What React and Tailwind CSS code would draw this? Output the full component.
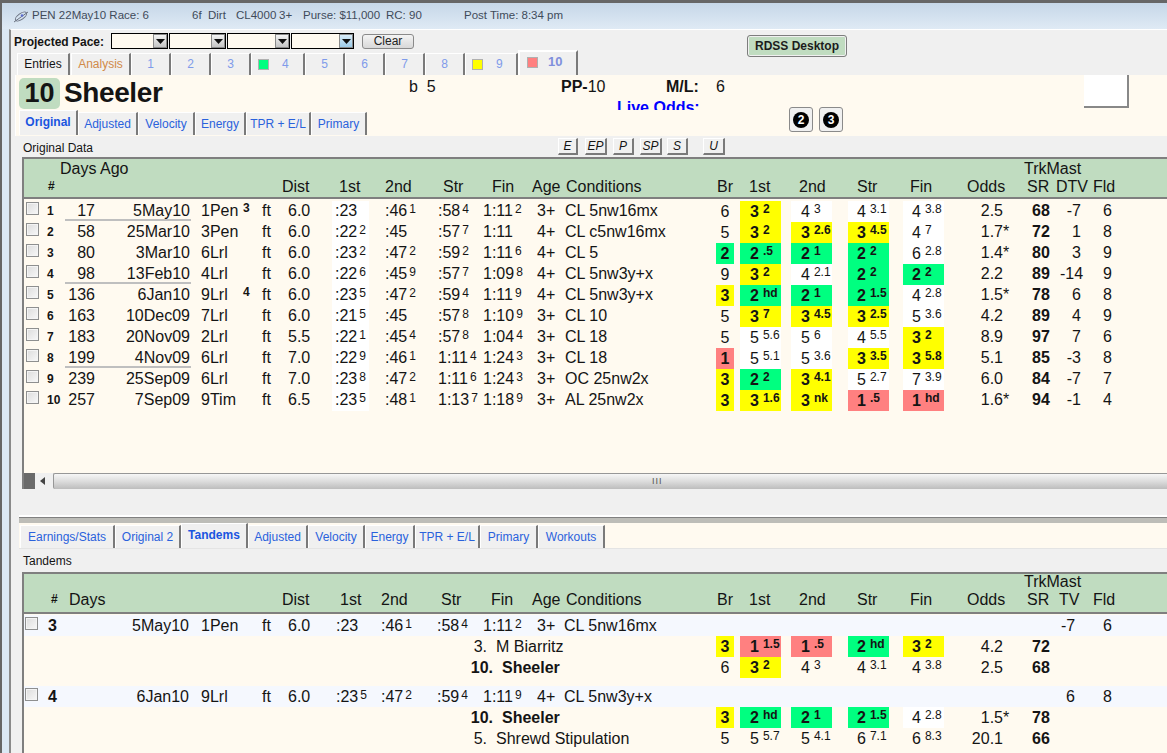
const BG = {
  y: 'bg-[#ffff00]',
  g: 'bg-[#00ff80]',
  r: 'bg-[#ff8080]',
  w: 'bg-white',
  n: '',
};

const TOP_ROWS = [
  { n: '1', days: '17', date: '5May10', track: '1Pen', tsup: '3', dist: '6.0', t1: [':23', ''], t2: [':46', '1'], t3: [':58', '4'], t4: ['1:11', '2'], age: '3+', cond: 'CL 5nw16mx', br: ['6', 'n'], p: [['3', '2', 'y'], ['4', '3', 'w'], ['4', '3.1', 'w'], ['4', '3.8', 'w']], odds: '2.5', star: false, sr: '68', dtv: '-7', fld: '6', line: true },
  { n: '2', days: '58', date: '25Mar10', track: '3Pen', tsup: '', dist: '6.0', t1: [':22', '2'], t2: [':45', ''], t3: [':57', '7'], t4: ['1:11', ''], age: '4+', cond: 'CL c5nw16mx', br: ['5', 'n'], p: [['3', '2', 'y'], ['3', '2.6', 'y'], ['3', '4.5', 'y'], ['4', '7', 'w']], odds: '1.7', star: true, sr: '72', dtv: '1', fld: '8' },
  { n: '3', days: '80', date: '3Mar10', track: '6Lrl', tsup: '', dist: '6.0', t1: [':23', '2'], t2: [':47', '2'], t3: [':59', '2'], t4: ['1:11', '6'], age: '4+', cond: 'CL 5', br: ['2', 'g'], p: [['2', '.5', 'g'], ['2', '1', 'g'], ['2', '2', 'g'], ['6', '2.8', 'w']], odds: '1.4', star: true, sr: '80', dtv: '3', fld: '9' },
  { n: '4', days: '98', date: '13Feb10', track: '4Lrl', tsup: '', dist: '6.0', t1: [':22', '6'], t2: [':45', '9'], t3: [':57', '7'], t4: ['1:09', '8'], age: '4+', cond: 'CL 5nw3y+x', br: ['9', 'n'], p: [['3', '2', 'y'], ['4', '2.1', 'w'], ['2', '2', 'g'], ['2', '2', 'g']], odds: '2.2', star: false, sr: '89', dtv: '-14', fld: '9', line: true },
  { n: '5', days: '136', date: '6Jan10', track: '9Lrl', tsup: '4', dist: '6.0', t1: [':23', '5'], t2: [':47', '2'], t3: [':59', '4'], t4: ['1:11', '9'], age: '4+', cond: 'CL 5nw3y+x', br: ['3', 'y'], p: [['2', 'hd', 'g'], ['2', '1', 'g'], ['2', '1.5', 'g'], ['4', '2.8', 'w']], odds: '1.5', star: true, sr: '78', dtv: '6', fld: '8' },
  { n: '6', days: '163', date: '10Dec09', track: '7Lrl', tsup: '', dist: '6.0', t1: [':21', '5'], t2: [':45', ''], t3: [':57', '8'], t4: ['1:10', '9'], age: '3+', cond: 'CL 10', br: ['5', 'n'], p: [['3', '7', 'y'], ['3', '4.5', 'y'], ['3', '2.5', 'y'], ['5', '3.6', 'w']], odds: '4.2', star: false, sr: '89', dtv: '4', fld: '9' },
  { n: '7', days: '183', date: '20Nov09', track: '2Lrl', tsup: '', dist: '5.5', t1: [':22', '1'], t2: [':45', '4'], t3: [':57', '8'], t4: ['1:04', '4'], age: '3+', cond: 'CL 18', br: ['5', 'n'], p: [['5', '5.6', 'w'], ['5', '6', 'w'], ['4', '5.5', 'w'], ['3', '2', 'y']], odds: '8.9', star: false, sr: '97', dtv: '7', fld: '6' },
  { n: '8', days: '199', date: '4Nov09', track: '6Lrl', tsup: '', dist: '7.0', t1: [':22', '9'], t2: [':46', '1'], t3: ['1:11', '4'], t4: ['1:24', '3'], age: '3+', cond: 'CL 18', br: ['1', 'r'], p: [['5', '5.1', 'w'], ['5', '3.6', 'w'], ['3', '3.5', 'y'], ['3', '5.8', 'y']], odds: '5.1', star: false, sr: '85', dtv: '-3', fld: '8', line: true },
  { n: '9', days: '239', date: '25Sep09', track: '6Lrl', tsup: '', dist: '7.0', t1: [':23', '8'], t2: [':47', '2'], t3: ['1:11', '6'], t4: ['1:24', '3'], age: '3+', cond: 'OC 25nw2x', br: ['3', 'y'], p: [['2', '2', 'g'], ['3', '4.1', 'y'], ['5', '2.7', 'w'], ['7', '3.9', 'w']], odds: '6.0', star: false, sr: '84', dtv: '-7', fld: '7' },
  { n: '10', days: '257', date: '7Sep09', track: '9Tim', tsup: '', dist: '6.5', t1: [':23', '5'], t2: [':48', '1'], t3: ['1:13', '7'], t4: ['1:18', '9'], age: '3+', cond: 'AL 25nw2x', br: ['3', 'y'], p: [['3', '1.6', 'y'], ['3', 'nk', 'y'], ['1', '.5', 'r'], ['1', 'hd', 'r']], odds: '1.6', star: true, sr: '94', dtv: '-1', fld: '4' },
];

const TANDEMS = [
  {
    n: '3', date: '5May10', track: '1Pen', dist: '6.0', t1: [':23', ''], t2: [':46', '1'], t3: [':58', '4'], t4: ['1:11', '2'], age: '3+', cond: 'CL 5nw16mx', dtv: '-7', fld: '6',
    horses: [
      { num: '3.', name: 'M Biarritz', bold: false, br: ['3', 'y'], p: [['1', '1.5', 'r'], ['1', '.5', 'r'], ['2', 'hd', 'g'], ['3', '2', 'y']], odds: '4.2', star: false, sr: '72' },
      { num: '10.', name: 'Sheeler', bold: true, br: ['6', 'n'], p: [['3', '2', 'y'], ['4', '3', 'n'], ['4', '3.1', 'n'], ['4', '3.8', 'n']], odds: '2.5', star: false, sr: '68' },
    ],
  },
  {
    n: '4', date: '6Jan10', track: '9Lrl', dist: '6.0', t1: [':23', '5'], t2: [':47', '2'], t3: [':59', '4'], t4: ['1:11', '9'], age: '4+', cond: 'CL 5nw3y+x', dtv: '6', fld: '8',
    horses: [
      { num: '10.', name: 'Sheeler', bold: true, br: ['3', 'y'], p: [['2', 'hd', 'g'], ['2', '1', 'g'], ['2', '1.5', 'g'], ['4', '2.8', 'w']], odds: '1.5', star: true, sr: '78' },
      { num: '5.', name: 'Shrewd Stipulation', bold: false, br: ['5', 'n'], p: [['5', '5.7', 'n'], ['5', '4.1', 'n'], ['6', '7.1', 'n'], ['6', '8.3', 'n']], odds: '20.1', star: false, sr: '66' },
    ],
  },
];

const TOP_TABS = [
  { label: '1', w: 'w-[40px]' },
  { label: '2', w: 'w-[40px]' },
  { label: '3', w: 'w-[40px]' },
  { label: '4', w: 'w-[54px]', sq: 'bg-[#00ff80]' },
  { label: '5', w: 'w-[40px]' },
  { label: '6', w: 'w-[40px]' },
  { label: '7', w: 'w-[40px]' },
  { label: '8', w: 'w-[40px]' },
  { label: '9', w: 'w-[53px]', sq: 'bg-[#ffff00]' },
];

const SUB_TABS = [
  { label: 'Original', w: 'w-[59px]', active: true },
  { label: 'Adjusted', w: 'w-[60px]' },
  { label: 'Velocity', w: 'w-[57px]' },
  { label: 'Energy', w: 'w-[51px]' },
  { label: 'TPR + E/L', w: 'w-[65px]' },
  { label: 'Primary', w: 'w-[56px]' },
];

const LOWER_TABS = [
  { label: 'Earnings/Stats', w: 'w-[95px]' },
  { label: 'Original 2', w: 'w-[66px]' },
  { label: 'Tandems', w: 'w-[67px]', active: true },
  { label: 'Adjusted', w: 'w-[60px]' },
  { label: 'Velocity', w: 'w-[57px]' },
  { label: 'Energy', w: 'w-[50px]' },
  { label: 'TPR + E/L', w: 'w-[65px]' },
  { label: 'Primary', w: 'w-[58px]' },
  { label: 'Workouts', w: 'w-[67px]' },
];

const FILTERS = [
  { label: 'E', cls: 'w-[20px]' },
  { label: 'EP', cls: 'w-[22px] ml-[7px]' },
  { label: 'P', cls: 'w-[21px] ml-[6px]' },
  { label: 'SP', cls: 'w-[22px] ml-[6px]' },
  { label: 'S', cls: 'w-[21px] ml-[5px]' },
  { label: 'U', cls: 'w-[22px] ml-[15px]' },
];

const HEAD_TOP = [
  ['#', 'w-[234px] text-[12px] font-bold'], ['Dist', 'w-[57px]'], ['1st', 'w-[46px]'], ['2nd', 'w-[58px]'], ['Str', 'w-[49px]'], ['Fin', 'w-[40px]'],
  ['Age', 'w-[34px]'], ['Conditions', 'w-[151px]'], ['Br', 'w-[32px]'], ['1st', 'w-[50px]'], ['2nd', 'w-[58px]'], ['Str', 'w-[53px]'],
  ['Fin', 'w-[57px]'], ['Odds', 'w-[60px]'], ['SR', 'w-[29px]'], ['DTV', 'w-[37px]'], ['Fld', 'w-[30px]'],
];

const HEAD_LOW = [
  ['#', 'w-[18px] text-[12px] font-bold'], ['Days', 'w-[213px]'], ['Dist', 'w-[58px]'], ['1st', 'w-[41px]'], ['2nd', 'w-[60px]'], ['Str', 'w-[50px]'], ['Fin', 'w-[41px]'],
  ['Age', 'w-[34px]'], ['Conditions', 'w-[151px]'], ['Br', 'w-[32px]'], ['1st', 'w-[50px]'], ['2nd', 'w-[58px]'], ['Str', 'w-[53px]'],
  ['Fin', 'w-[57px]'], ['Odds', 'w-[60px]'], ['SR', 'w-[32px]'], ['TV', 'w-[34px]'], ['Fld', 'w-[30px]'],
];

function Sup({ children, bold, className = '' }) {
  return (
    <span className={`text-[12px] leading-none align-[3px] ${bold ? 'font-bold' : ''} ${className}`}>{children}</span>
  );
}

function Time({ value, className = '' }) {
  return (
    <span className={`shrink-0 whitespace-nowrap ${className}`}>
      {value[0]}
      {value[1] && <Sup className="ml-[2px]">{value[1]}</Sup>}
    </span>
  );
}

function Check() {
  return <span className="block w-[13px] h-[13px] border border-[#8e8f8f] bg-gradient-to-br from-[#dcdcdc] to-[#f8f8f8] shadow-[inset_0_0_0_1px_#f4f4f4]" />;
}

function Pos({ cell, width, pad, gap }) {
  const colored = cell[2] === 'y' || cell[2] === 'g' || cell[2] === 'r';
  return (
    <span className={`${width} ${pad} ${gap} ${BG[cell[2]]} shrink-0 h-full pb-[1px] flex items-center whitespace-nowrap ${colored ? 'font-bold' : ''}`}>
      <span>{cell[0]}</span>
      <Sup bold={colored} className="ml-[4px] -mt-[4px]">{cell[1]}</Sup>
    </span>
  );
}

function Results({ br, p }) {
  return (
    <>
      <span className={`w-[18px] h-full pb-[1px] shrink-0 flex items-center justify-center ${BG[br[1]]} ${br[1] === 'n' ? '' : 'font-bold'}`}>{br[0]}</span>
      <Pos cell={p[0]} width="w-[41px]" pad="pl-[10px]" gap="ml-[6px]" />
      <Pos cell={p[1]} width="w-[41px]" pad="pl-[10px]" gap="ml-[10px]" />
      <Pos cell={p[2]} width="w-[41px]" pad="pl-[9px]" gap="ml-[16px]" />
      <Pos cell={p[3]} width="w-[41px]" pad="pl-[9px]" gap="ml-[14px]" />
    </>
  );
}

function Odds({ value, star }) {
  return (
    <span className="w-[88px] shrink-0 whitespace-nowrap pl-[24px] flex">
      <span className="w-[35px] text-right shrink-0">{value}</span>
      {star && <span>*</span>}
    </span>
  );
}

function EntryRow({ r }) {
  return (
    <div className="flex items-start h-[21px] text-[16px] leading-[19px] text-[#141414]">
      <span className="w-[20px] shrink-0 pl-[2px] mt-[1px]"><Check /></span>
      <span className="w-[21px] shrink-0 pl-[3px] text-[12px] font-bold leading-[21px]">{r.n}</span>
      <span className={`w-[126px] shrink-0 h-[20px] flex ${r.line ? 'border-b-2 border-[#bfbfbf]' : ''}`}>
        <span className="w-[30px] text-right">{r.days}</span>
        <span className="flex-1 text-right pr-[1px]">{r.date}</span>
      </span>
      <span className="ml-[10px] w-[42px] shrink-0">{r.track}</span>
      <span className="w-[19px] shrink-0 text-[12px] font-bold leading-[15px]">{r.tsup}</span>
      <span className="w-[26px] shrink-0">ft</span>
      <span className="w-[44px] shrink-0">{r.dist}</span>
      <Time value={r.t1} className="w-[37px] pl-[3px] bg-white h-full" />
      <Time value={r.t2} className="w-[53px] ml-[16px]" />
      <Time value={r.t3} className="w-[45px]" />
      <Time value={r.t4} className="w-[54px]" />
      <span className="w-[28px] shrink-0">{r.age}</span>
      <span className="w-[151px] shrink-0 whitespace-nowrap">{r.cond}</span>
      <Results br={r.br} p={r.p} />
      <Odds value={r.odds} star={r.star} />
      <span className="w-[28px] shrink-0 font-bold">{r.sr}</span>
      <span className="w-[21px] shrink-0 text-right whitespace-nowrap">{r.dtv}</span>
      <span className="ml-[22px]">{r.fld}</span>
    </div>
  );
}

function TandemGroup({ g }) {
  return (
    <div className="mb-[8px]">
      <div className="flex items-center h-[21px] text-[16px] leading-[21px] text-[#141414] bg-[#f5f8fe]">
        <span className="w-[20px] shrink-0 pl-[1px] -mt-[4px]"><Check /></span>
        <span className="w-[25px] shrink-0 pl-[4px] font-bold">{g.n}</span>
        <span className="w-[122px] shrink-0 text-right pr-[2px]">{g.date}</span>
        <span className="ml-[10px] w-[61px] shrink-0">{g.track}</span>
        <span className="w-[26px] shrink-0">ft</span>
        <span className="w-[48px] shrink-0">{g.dist}</span>
        <Time value={g.t1} className="w-[45px]" />
        <Time value={g.t2} className="w-[56px]" />
        <Time value={g.t3} className="w-[46px]" />
        <Time value={g.t4} className="w-[54px]" />
        <span className="w-[27px] shrink-0">{g.age}</span>
        <span className="w-[497px] shrink-0 whitespace-nowrap">{g.cond}</span>
        <span className="w-[14px] shrink-0 text-right whitespace-nowrap">{g.dtv}</span>
        <span className="ml-[28px]">{g.fld}</span>
      </div>
      {g.horses.map((h) => (
        <div key={h.name} className="flex items-center h-[21px] text-[16px] leading-[21px] text-[#141414]">
          <span className={`shrink-0 text-right ${h.bold ? 'w-[469px] font-bold' : 'w-[463px]'}`}>{h.num}</span>
          <span className={`shrink-0 whitespace-nowrap pl-[9px] ${h.bold ? 'w-[223px] font-bold' : 'w-[229px]'}`}>{h.name}</span>
          <Results br={h.br} p={h.p} />
          <Odds value={h.odds} star={h.star} />
          <span className="w-[28px] shrink-0 font-bold">{h.sr}</span>
        </div>
      ))}
    </div>
  );
}

function HeaderBar({ cells, first, pad, lift = '' }) {
  return (
    <div className="h-[42px] bg-[#c0dcc0] border-t-2 border-b-2 border-[#7f7f7f] text-[16px] text-[#141414] shrink-0">
      <div className={`flex h-[18px] leading-[19px] whitespace-nowrap ${lift}`}>
        <span className="pl-[36px] w-[1000px] shrink-0">{first}</span>
        <span>TrkMast</span>
      </div>
      <div className={`flex h-[19px] leading-[19px] whitespace-nowrap ${pad}`}>
        {cells.map(([label, cls], i) => (
          <span key={i} className={`shrink-0 ${cls}`}>{label}</span>
        ))}
      </div>
    </div>
  );
}

function SubTab({ tab }) {
  return (
    <div
      className={`${tab.w} shrink-0 flex items-center justify-center text-[12px] whitespace-nowrap bg-[#f0f0f0] border-r-2 border-[#7a7a7a] border-l border-t border-l-white border-t-white ${
        tab.active ? 'h-[25px] pb-[3px] font-bold text-[#1a55e0]' : 'h-[23px] text-[#2a62dc]'
      }`}
    >
      {tab.label}
    </div>
  );
}

function PaceSelect({ width, focused }) {
  return (
    <div className={`${width} h-[16px] border border-black bg-[#fffaf0] flex justify-end shrink-0`}>
      <span
        className={`w-[14px] h-full flex items-end justify-center pb-[3px] border border-[#8a8a8a] bg-gradient-to-b ${
          focused ? 'from-[#d8ecf8] to-[#9ccbe8] border-[#3f8ac0]' : 'from-[#f4f4f4] to-[#c4c4c4]'
        }`}
      >
        <svg width="9" height="5" viewBox="0 0 9 5"><path d="M0 0h9L4.5 5z" fill="#111" /></svg>
      </span>
    </div>
  );
}

function ScrollBar() {
  return (
    <div className="h-[16px] flex shrink-0">
      <div className="w-[11px] bg-[#6a6a6a]" />
      <div className="w-[18px] bg-[#f0f0f0] flex items-center justify-center pr-[4px]">
        <svg width="5" height="8" viewBox="0 0 5 8"><path d="M5 0v8L0 4z" fill="#444" /></svg>
      </div>
      <div className="flex-1 rounded-l-[2px] border-t border-l border-[#979797] bg-gradient-to-b from-[#f6f6f6] via-[#dcdcdc] to-[#bdbdbd] flex items-center">
        <span className="ml-[598px] text-[9px] leading-none text-[#555] tracking-[1px]">III</span>
      </div>
    </div>
  );
}

export default function App() {
  return (
    <div className="w-[1167px] h-[753px] overflow-hidden flex flex-col border-l-2 border-t-[3px] border-[#666666] bg-[#dbe8f4] font-['Liberation_Sans',Arial,sans-serif] text-[#141414]">
      {/* title bar */}
      <div className="h-[26px] shrink-0 flex items-center text-[11.5px] text-[#3f4b5a] bg-gradient-to-b from-[#c6d7e8] to-[#dfeaf5] whitespace-nowrap">
        <svg className="ml-[11px] w-[16px] shrink-0" width="16" height="13" viewBox="0 0 16 13" fill="none">
          <path d="M1 12 15 2" stroke="#6b7280" strokeWidth="1" />
          <ellipse cx="8" cy="6.5" rx="6.5" ry="3" transform="rotate(-35 8 6.5)" stroke="#6b7280" strokeWidth="1" />
          <circle cx="9" cy="5.5" r="1.2" fill="#5b6bd0" />
        </svg>
        <span className="ml-[3px] w-[160px] shrink-0">PEN 22May10 Race: 6</span>
        <span className="w-[16px] shrink-0">6f</span>
        <span className="w-[28px] shrink-0">Dirt</span>
        <span className="w-[43px] shrink-0">CL4000</span>
        <span className="w-[24px] shrink-0">3+</span>
        <span className="w-[83px] shrink-0">Purse: $11,000</span>
        <span className="w-[78px] shrink-0">RC: 90</span>
        <span>Post Time: 8:34 pm</span>
      </div>

      <div className="flex-1 min-h-0 ml-[7px] border-l-2 border-[#8a8a8a] border-t border-t-white bg-[#f0f0f0] flex flex-col overflow-hidden">
        {/* projected pace */}
        <div className="h-[23px] shrink-0 flex items-center pl-[3px] pb-[2px]">
          <span className="w-[97px] shrink-0 mt-[3px] text-[12px] font-bold whitespace-nowrap">Projected Pace:</span>
          <div className="flex gap-[1px] shrink-0">
            <PaceSelect width="w-[57px]" />
            <PaceSelect width="w-[57px]" />
            <PaceSelect width="w-[63px]" />
            <PaceSelect width="w-[63px]" focused />
          </div>
          <button className="ml-[8px] w-[52px] h-[15px] mt-[2px] shrink-0 rounded-[3px] border border-[#8a8a8a] bg-gradient-to-b from-[#f4f4f4] to-[#d8d8d8] text-[12px] leading-[13px] text-[#222]">Clear</button>
          <button className="ml-[333px] w-[100px] h-[22px] mt-[10px] shrink-0 rounded-[3px] border border-[#7d7d7d] bg-[#c0dcc0] shadow-[inset_0_0_0_1px_#f0f0f0] text-[12px] font-bold text-[#1c1c1c]">RDSS Desktop</button>
        </div>

        {/* race tabs */}
        <div className="h-[22px] shrink-0 flex items-end pl-[6px] text-[12px] whitespace-nowrap">
          <div className="w-[53px] h-[22px] pb-[1px] mr-[1px] shrink-0 flex items-center justify-center bg-[#f0f0f0] border-r-2 border-[#7a7a7a] border-l border-t border-l-white border-t-white">Entries</div>
          <div className="w-[60px] h-[22px] pb-[1px] shrink-0 flex items-center justify-center text-[#d08a48] border-r-2 border-[#7a7a7a] border-l border-t border-l-white border-t-white">Analysis</div>
          {TOP_TABS.map((t) => (
            <div key={t.label} className={`${t.w} h-[22px] pb-[1px] shrink-0 flex items-center text-[#7f9bea] border-r-2 border-[#7a7a7a] border-l border-t border-l-white border-t-white ${t.sq ? 'pl-[6px]' : 'justify-center'}`}>
              {t.sq && <span className={`${t.sq} w-[11px] h-[11px] border border-[#b0b0b0] mr-[13px] shrink-0`} />}
              {t.label}
            </div>
          ))}
          <div className="w-[60px] h-[25px] shrink-0 flex items-center pl-[7px] pb-[3px] text-[13px] font-bold text-[#7f8fdc] border-r-2 border-[#7a7a7a] border-l-2 border-t-2 border-l-white border-t-white">
            <span className="w-[11px] h-[11px] bg-[#ff8080] border border-[#b0b0b0] mr-[10px] shrink-0" />
            10
          </div>
        </div>

        {/* horse header */}
        <div className="h-[61px] shrink-0 ml-[4px] bg-[#fffaf0] border-l border-white">
          <div className="h-[35px] flex overflow-hidden pl-[3px]">
            <span className="mt-[3px] w-[41px] h-[31px] shrink-0 rounded-[5px] bg-[#c0dcc0] flex items-center justify-center text-[27px] font-bold leading-none">10</span>
            <span className="ml-[4px] w-[345px] shrink-0 text-[28px] font-bold tracking-[-0.4px] leading-[36px] whitespace-nowrap">Sheeler</span>
            <span className="w-[152px] shrink-0 pt-[1px] text-[16px] leading-[22px]">b&nbsp;&nbsp;5</span>
            <div className="w-[523px] shrink-0 pt-[1px] text-[16px]">
              <div className="flex h-[22px] leading-[22px]">
                <span className="w-[105px] shrink-0"><b>PP-</b>10</span>
                <b className="w-[50px] shrink-0">M/L:</b>
                <span>6</span>
              </div>
              <div className="ml-[56px] leading-[19px] font-bold text-[#0000ff] whitespace-nowrap">Live Odds:</div>
            </div>
            <div className="w-[45px] h-[33px] shrink-0 bg-white border-r-2 border-b-2 border-[#888888]" />
          </div>
          <div className="h-[26px] flex items-end pl-[3px] pb-[1px]">
            {SUB_TABS.map((t) => <SubTab key={t.label} tab={t} />)}
            <div className="flex gap-[6px] ml-[422px] self-start -mt-[3px] shrink-0">
              {['2', '3'].map((n) => (
                <span key={n} className="w-[24px] h-[25px] rounded-[3px] border border-[#8a8a8a] bg-[#f0f0f0] flex items-center justify-center">
                  <span className="w-[16px] h-[16px] rounded-full bg-black text-white text-[12px] leading-[16px] font-bold text-center">{n}</span>
                </span>
              ))}
            </div>
          </div>
        </div>

        {/* original data */}
        <div className="ml-[8px] flex-1 min-h-0 flex flex-col">
          <div className="h-[21px] shrink-0 flex items-center pl-[4px] text-[12px]">
            <span className="w-[535px] shrink-0 pt-[2px]">Original Data</span>
            {FILTERS.map((f) => (
              <span key={f.label} className={`${f.cls} h-[17px] shrink-0 flex items-center justify-center italic bg-[#f0f0f0] border border-white border-r-2 border-b-2 border-r-[#7a7a7a] border-b-[#7a7a7a]`}>{f.label}</span>
            ))}
          </div>

          <div className="ml-[3px] h-[332px] shrink-0 border-l-2 border-[#7f7f7f] flex flex-col">
            <HeaderBar cells={HEAD_TOP} first="Days Ago" pad="pl-[24px]" />
            <div className="flex-1 min-h-0 bg-[#fffaf0] pt-[2px]">
              {TOP_ROWS.map((r) => <EntryRow key={r.n} r={r} />)}
            </div>
            <ScrollBar />
          </div>

          <div className="h-[28px] shrink-0 border-b-2 border-white" />
          <div className="h-[6px] shrink-0 border-t border-[#808080] bg-[#bdbdb8]" />

          {/* tandems */}
          <div className="h-[26px] shrink-0 bg-[#fffaf0] flex items-end border-b border-[#e4e4e4] pl-[1px]">
            {LOWER_TABS.map((t) => <SubTab key={t.label} tab={t} />)}
          </div>
          <div className="h-[23px] shrink-0 flex items-center pl-[4px] text-[12px]">Tandems</div>
          <div className="ml-[3px] border-l-2 border-[#7f7f7f] flex-1 min-h-0 flex flex-col">
            <HeaderBar cells={HEAD_LOW} first="" pad="pl-[27px]" lift="-mt-[2px]" />
            <div className="flex-1 min-h-0 bg-[#fffaf0] pt-[1px]">
              {TANDEMS.map((g) => <TandemGroup key={g.n} g={g} />)}
            </div>
          </div>
        </div>
      </div>
    </div>
  );
}
